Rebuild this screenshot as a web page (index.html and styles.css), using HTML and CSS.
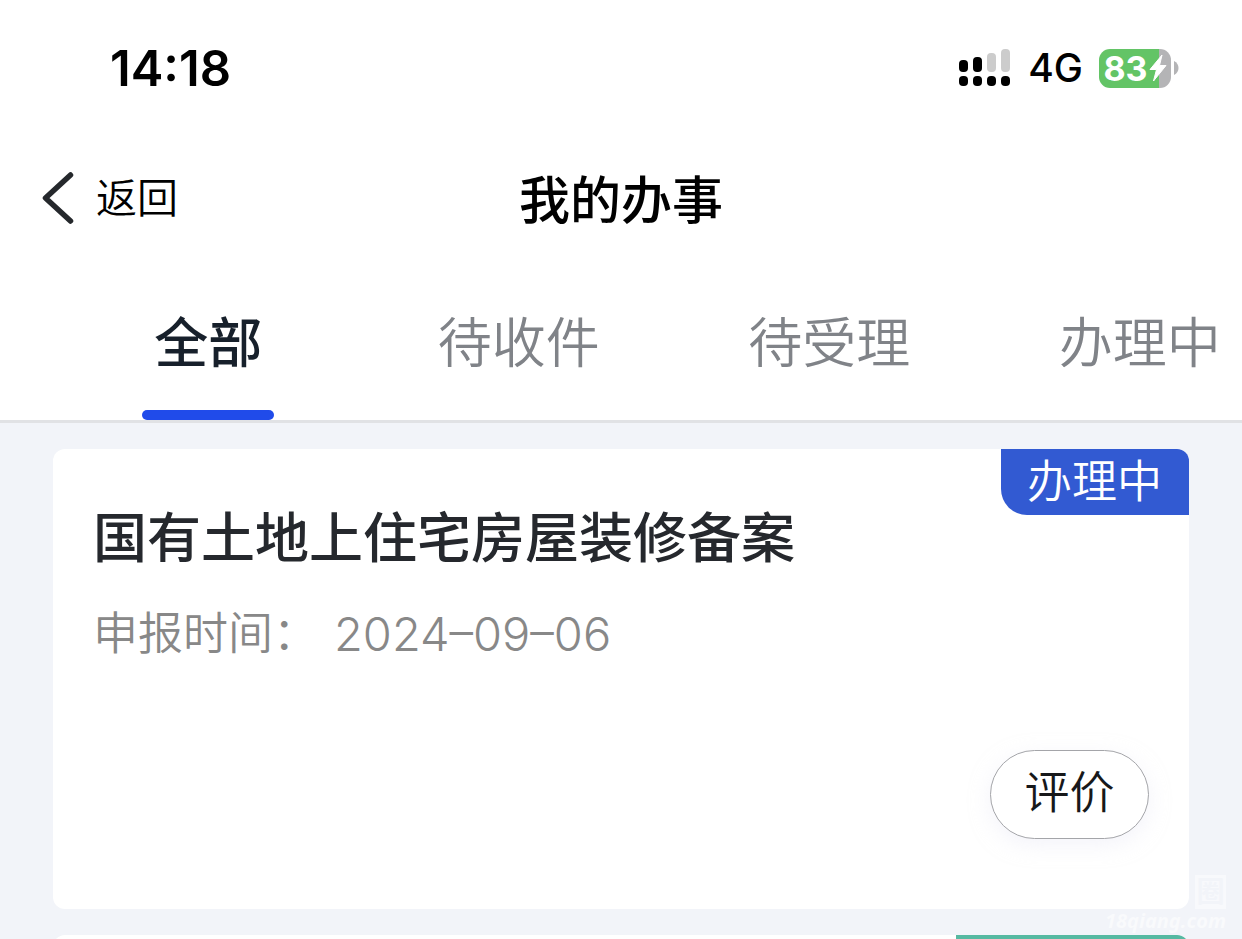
FILE: index.html
```html
<!DOCTYPE html>
<html lang="zh-CN">
<head>
<meta charset="utf-8">
<meta name="viewport" content="width=device-width, initial-scale=1">
<title>我的办事</title>
<link rel="stylesheet" href="styles.css">
</head>
<body>
<div class="app">
  <div class="status">
    <time class="clock">14:18</time>
    <div class="indicators">
      <svg class="signal" width="52" height="38" viewBox="0 0 52 38" aria-hidden="true">
        <g fill="#ccc"><rect x="28" y="4" width="9" height="19" rx="4"/><rect x="42" y="0" width="9" height="23" rx="4"/></g>
        <rect x="0" y="11" width="9" height="12" rx="4"/><rect x="14" y="8" width="9" height="15" rx="4"/>
        <rect x="0" y="27" width="9" height="10" rx="4"/><rect x="14" y="27" width="9" height="10" rx="4"/>
        <rect x="28" y="27" width="9" height="10" rx="4"/><rect x="42" y="27" width="9" height="10" rx="4"/>
      </svg>
      <span class="network">4G</span>
      <div class="battery">
        <div class="cell"><span class="level">83</span>
          <svg width="18" height="28" viewBox="0 0 18 28" aria-hidden="true"><path d="M13 1 1 15.500h6.500L4.500 27 17 11.500h-6.500Z" fill="#fff" stroke="#fff" stroke-width="1" stroke-linejoin="round"/></svg>
        </div>
        <svg width="5" height="14" viewBox="0 0 5 14" aria-hidden="true"><path d="M0 0C6 3 6 11 0 14Z" fill="#b4b4b6"/></svg>
      </div>
    </div>
  </div>
  <header class="header">
    <button class="back" type="button">
      <svg width="32" height="52" viewBox="0 0 32 52" aria-hidden="true"><path d="M28.500 3 3.500 26 28.500 49" fill="none" stroke="#25282c" stroke-width="5.500" stroke-linecap="round" stroke-linejoin="round"/></svg>
      返回
    </button>
    <h1 class="title">我的办事</h1>
  </header>
  <nav class="tabs">
    <a class="tab active" href="#all" aria-current="page">全部</a>
    <a class="tab" href="#collect">待收件</a>
    <a class="tab" href="#accept">待受理</a>
    <a class="tab" href="#processing">办理中</a>
  </nav>
  <main class="list">
    <article class="card">
      <span class="badge">办理中</span>
      <h2 class="name">国有土地上住宅房屋装修备案</h2>
      <p class="meta"><span>申报时间：</span><time class="date" datetime="2024-09-06">2024–09–06</time></p>
      <div class="actions"><button class="rate" type="button">评价</button></div>
    </article>
    <article class="card">
      <span class="badge done"></span>
    </article>
  </main>
  <div class="watermark"><span class="seal">圈</span><span class="site">18qiang.com</span></div>
</div>
</body>
</html>
```

FILE: styles.css
```css
* { box-sizing: border-box; }
body { margin: 0; background: #f2f4f9; font-family: Inter, "Noto Sans CJK SC", sans-serif; }
h1, h2, p { margin: 0; }
button { padding: 0; border: 0; background: none; font: inherit; cursor: pointer; }

.app { position: relative; height: 100vh; overflow: hidden; }

.status { display: flex; justify-content: space-between; align-items: center; height: 136px; padding: 0 63px 0 110px; background: #fff; color: #000; }
.clock { font-size: 49px; font-weight: 600; }
.indicators { display: flex; align-items: center; }
.network { margin-left: 17px; font-size: 39px; font-weight: 450; line-height: 48px; }
.battery { display: flex; align-items: center; gap: 3px; margin-left: 16px; }
.cell { display: flex; align-items: center; justify-content: center; gap: 1px; width: 72px; height: 39px; border-radius: 11px; background: linear-gradient(90deg, #63c466 83%, #b4b4b6 83%); }
.level { color: #fff; font-size: 34px; font-weight: 700; line-height: 39px; }

.header { display: grid; grid-template-columns: 1fr auto 1fr; align-items: center; height: 124px; padding: 0 42px; background: #fff; }
.back { display: flex; align-items: center; gap: 22px; color: #000; font-size: 41px; font-weight: 350; line-height: 60px; }
.title { padding-top: 6px; color: #000; font-size: 51px; font-weight: 500; line-height: 76px; }

.tabs { display: flex; height: 163px; padding-left: 53px; overflow: hidden; border-bottom: 3px solid #e1e2e5; background: #fff; }
.tab { display: flex; flex: 0 0 25vw; flex-direction: column; align-items: center; justify-content: space-between; padding-top: 44px; color: #808388; font-size: 54px; font-weight: 350; line-height: 80px; text-decoration: none; }
.active { color: #17202b; font-weight: 500; }
.active::after { content: ""; width: 132px; height: 10px; border-radius: 5px; background: #204bea; }

.list { display: flex; flex-direction: column; gap: 26px; padding: 26px 53px; }
.card { position: relative; flex: none; min-height: 460px; padding: 50px 40px 70px; border-radius: 12px; background: #fff; }
.badge { position: absolute; top: 0; right: 0; height: 66px; padding: 0 27px 0 26px; border-radius: 0 12px 0 26px; background: #325ad2; color: #fff; font-size: 45px; font-weight: 350; line-height: 66px; }
.done { width: 233px; background: #56b9a2; }
.name { color: #25282d; font-size: 54px; font-weight: 500; line-height: 80px; }
.meta { display: flex; gap: 16px; margin-top: 22px; color: #888; font-size: 45px; font-weight: 350; line-height: 66px; }
.date { font-size: 47px; }
.actions { display: flex; justify-content: flex-end; margin-top: 83px; }
.rate { width: 159px; height: 89px; padding-bottom: 4px; border: 1px solid #a4a5a9; border-radius: 45px; background: #fff; box-shadow: 0 6px 20px #e9eaf680; color: #17181a; font-size: 45px; font-weight: 350; line-height: 66px; }

.watermark { position: absolute; right: 16px; bottom: 6px; display: flex; flex-direction: column; align-items: flex-end; color: #f9fafc; pointer-events: none; }
.seal { width: 31px; height: 34px; background: #f8f9fc; color: #f2f4f9; font-size: 28px; font-weight: 700; line-height: 34px; text-align: center; }
.site { font: italic bold 20px/24px "Noto Sans", sans-serif; }
```
